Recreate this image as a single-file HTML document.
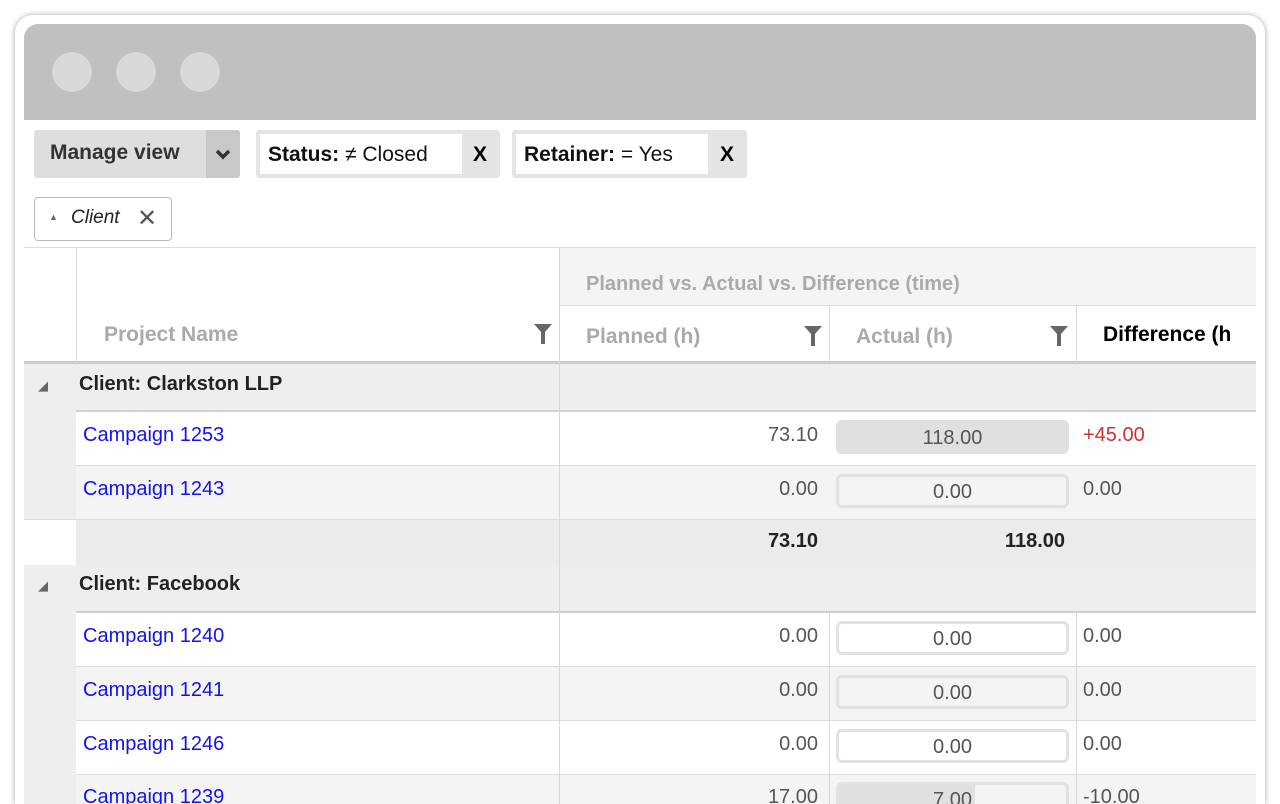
<!DOCTYPE html><html style="overflow:hidden;height:804px"><head><style>
body{margin:0;width:1280px;height:804px;overflow:hidden;background:#fff;font-family:"Liberation Sans",sans-serif;position:relative}
.a{position:absolute}
.frame{left:15px;top:15px;width:1250px;height:789px;border-radius:18px 18px 0 0;background:#fff;box-shadow:0 0 6px rgba(0,0,0,.35)}
.tb{left:24px;top:24px;width:1232px;height:96px;background:#c0c0c0;border-radius:14px 14px 0 0}
.dot{top:52px;width:40px;height:40px;border-radius:50%;background:#d8d8d8}
.chip{top:130px;height:48px;background:#e4e4e4;border-radius:3px}
.chip .in{position:absolute;left:4px;top:4px;bottom:4px;background:#fff;font-size:21px;color:#111;line-height:42px;padding-left:8px}
.x{position:absolute;top:0;line-height:50px;font-size:21px;font-weight:bold;color:#000}
.t{font-size:20px;white-space:nowrap}
.link{color:#1212f0}
.num{color:#555;text-align:right}
.box{height:34px;border:3px solid #e2e2e2;border-radius:6px;box-sizing:border-box;text-align:center;line-height:30px;font-size:20px;color:#555}
.hl{background:#ddd;height:1px}
.vl{background:#d8d8d8;width:1px}
.funnel{width:18px;height:22px}
</style></head><body>
<div class="a frame"></div>
<div class="a tb"></div>
<div class="a dot" style="left:52px"></div><div class="a dot" style="left:116px"></div><div class="a dot" style="left:180px"></div>

<div class="a chip" style="left:34px;width:206px;background:#dedede"><div style="position:absolute;left:16px;top:0;line-height:46px;font-size:21px;font-weight:bold;color:#333">Manage view</div><div style="position:absolute;left:172px;top:0;width:34px;height:48px;background:#c8c8c8;border-radius:0 3px 3px 0"><svg width="34" height="48"><path d="M11 21l6 6 6-6" stroke="#333" stroke-width="3.5" fill="none"/></svg></div></div>
<div class="a chip" style="left:256px;width:244px"><div class="in" style="width:194px"><b>Status:</b> ≠ Closed</div><div class="x" style="left:217px">X</div></div>
<div class="a chip" style="left:512px;width:235px"><div class="in" style="width:184px"><b>Retainer:</b> = Yes</div><div class="x" style="left:208px">X</div></div>

<div class="a" style="left:34px;top:197px;width:136px;height:42px;border:1px solid #bbb;border-radius:4px;background:#fff"><span class="a" style="left:14px;top:14px;font-size:9px;color:#666">▲</span><span class="a" style="left:36px;top:9px;font-size:19px;font-style:italic;color:#222">Client</span><span class="a" style="left:102px;top:6px;font-size:24px;color:#555">✕</span></div>

<div class="a hl" style="left:24px;top:247px;width:1232px;background:#ddd"></div>
<div class="a" style="left:559px;top:248px;width:697px;height:57px;background:#f4f4f4"></div>
<div class="a hl" style="left:559px;top:305px;width:697px"></div>
<div class="a vl" style="left:76px;top:248px;height:114px"></div>
<div class="a vl" style="left:829px;top:305px;height:260px"></div>
<div class="a vl" style="left:1076px;top:305px;height:260px"></div>
<div class="a t" style="left:586px;top:273px;color:#aaa;font-weight:bold">Planned vs. Actual vs. Difference (time)</div>
<div class="a t" style="left:104px;top:323px;color:#aaa;font-weight:bold;font-size:21px">Project Name</div>
<div class="a t" style="left:586px;top:325px;color:#aaa;font-weight:bold;font-size:21px">Planned (h)</div>
<div class="a t" style="left:856px;top:325px;color:#aaa;font-weight:bold;font-size:21px">Actual (h)</div>
<div class="a t" style="left:1103px;top:323px;color:#000;font-weight:bold;font-size:21px">Difference (h</div>
<svg class="a funnel" style="left:534px;top:322px"><path d="M0 2h18l-7 8v12h-4v-12z" fill="#666"/></svg>
<svg class="a funnel" style="left:804px;top:324px"><path d="M0 2h18l-7 8v12h-4v-12z" fill="#666"/></svg>
<svg class="a funnel" style="left:1050px;top:324px"><path d="M0 2h18l-7 8v12h-4v-12z" fill="#666"/></svg>
<div class="a" style="left:24px;top:361px;width:1232px;height:3px;background:#ccc"></div>

<div class="a" style="left:24px;top:364px;width:1232px;height:47px;background:#eee"></div>
<div class="a" style="left:24px;top:411px;width:52px;height:108px;background:#eee"></div>
<div class="a" style="left:38px;top:378px;font-size:13px;color:#666">◢</div>
<div class="a t" style="left:79px;top:373px;font-weight:bold;color:#222">Client: Clarkston LLP</div>
<div class="a" style="left:76px;top:410px;width:1180px;height:2px;background:#d0d0d0"></div>
<div class="a" style="left:76px;top:412px;width:1180px;height:53px;background:#fff"></div>
<div class="a" style="left:76px;top:466px;width:1180px;height:53px;background:#f4f4f4"></div>
<div class="a hl" style="left:76px;top:465px;width:1180px"></div>
<div class="a hl" style="left:24px;top:519px;width:1232px"></div>
<div class="a" style="left:76px;top:520px;width:1180px;height:45px;background:#ebebeb"></div>

<div class="a" style="left:24px;top:565px;width:1232px;height:47px;background:#eee"></div>
<div class="a" style="left:24px;top:612px;width:52px;height:200px;background:#eee"></div>
<div class="a" style="left:38px;top:578px;font-size:13px;color:#666">◢</div>
<div class="a t" style="left:79px;top:573px;font-weight:bold;color:#222">Client: Facebook</div>
<div class="a" style="left:76px;top:611px;width:1180px;height:2px;background:#d0d0d0"></div>
<div class="a" style="left:76px;top:613px;width:1180px;height:53px;background:#fff"></div>
<div class="a" style="left:76px;top:667px;width:1180px;height:53px;background:#f4f4f4"></div>
<div class="a" style="left:76px;top:721px;width:1180px;height:53px;background:#fff"></div>
<div class="a" style="left:76px;top:775px;width:1180px;height:40px;background:#f4f4f4"></div>
<div class="a hl" style="left:76px;top:666px;width:1180px"></div>
<div class="a hl" style="left:76px;top:720px;width:1180px"></div>
<div class="a hl" style="left:76px;top:774px;width:1180px"></div>
<div class="a vl" style="left:829px;top:612px;height:200px"></div>
<div class="a vl" style="left:1076px;top:612px;height:200px"></div>
<div class="a vl" style="left:559px;top:248px;height:560px"></div>

<div class="a t link" style="left:83px;top:424px">Campaign 1253</div>
<div class="a t num" style="left:640px;width:178px;top:424px">73.10</div>
<div class="a box" style="left:836px;top:420px;width:233px;background:#e0e0e0;border-color:#e0e0e0">118.00</div>
<div class="a t" style="left:1083px;top:424px;color:#c33">+45.00</div>

<div class="a t link" style="left:83px;top:478px">Campaign 1243</div>
<div class="a t num" style="left:640px;width:178px;top:478px">0.00</div>
<div class="a box" style="left:836px;top:474px;width:233px;background:#f4f4f4">0.00</div>
<div class="a t" style="left:1083px;top:478px;color:#555">0.00</div>

<div class="a t num" style="left:640px;width:178px;top:530px;color:#222;font-weight:bold">73.10</div>
<div class="a t num" style="left:880px;width:185px;top:530px;color:#222;font-weight:bold">118.00</div>

<div class="a t link" style="left:83px;top:625px">Campaign 1240</div>
<div class="a t num" style="left:640px;width:178px;top:625px">0.00</div>
<div class="a box" style="left:836px;top:621px;width:233px;background:#fff">0.00</div>
<div class="a t" style="left:1083px;top:625px;color:#555">0.00</div>

<div class="a t link" style="left:83px;top:679px">Campaign 1241</div>
<div class="a t num" style="left:640px;width:178px;top:679px">0.00</div>
<div class="a box" style="left:836px;top:675px;width:233px;background:#f4f4f4">0.00</div>
<div class="a t" style="left:1083px;top:679px;color:#555">0.00</div>

<div class="a t link" style="left:83px;top:733px">Campaign 1246</div>
<div class="a t num" style="left:640px;width:178px;top:733px">0.00</div>
<div class="a box" style="left:836px;top:729px;width:233px;background:#fff">0.00</div>
<div class="a t" style="left:1083px;top:733px;color:#555">0.00</div>

<div class="a t link" style="left:83px;top:786px">Campaign 1239</div>
<div class="a t num" style="left:640px;width:178px;top:786px">17.00</div>
<div class="a box" style="left:836px;top:782px;width:233px;background:linear-gradient(90deg,#e0e0e0 60%,#f4f4f4 60%)">7.00</div>
<div class="a t" style="left:1083px;top:786px;color:#555">-10.00</div>
</body></html>
